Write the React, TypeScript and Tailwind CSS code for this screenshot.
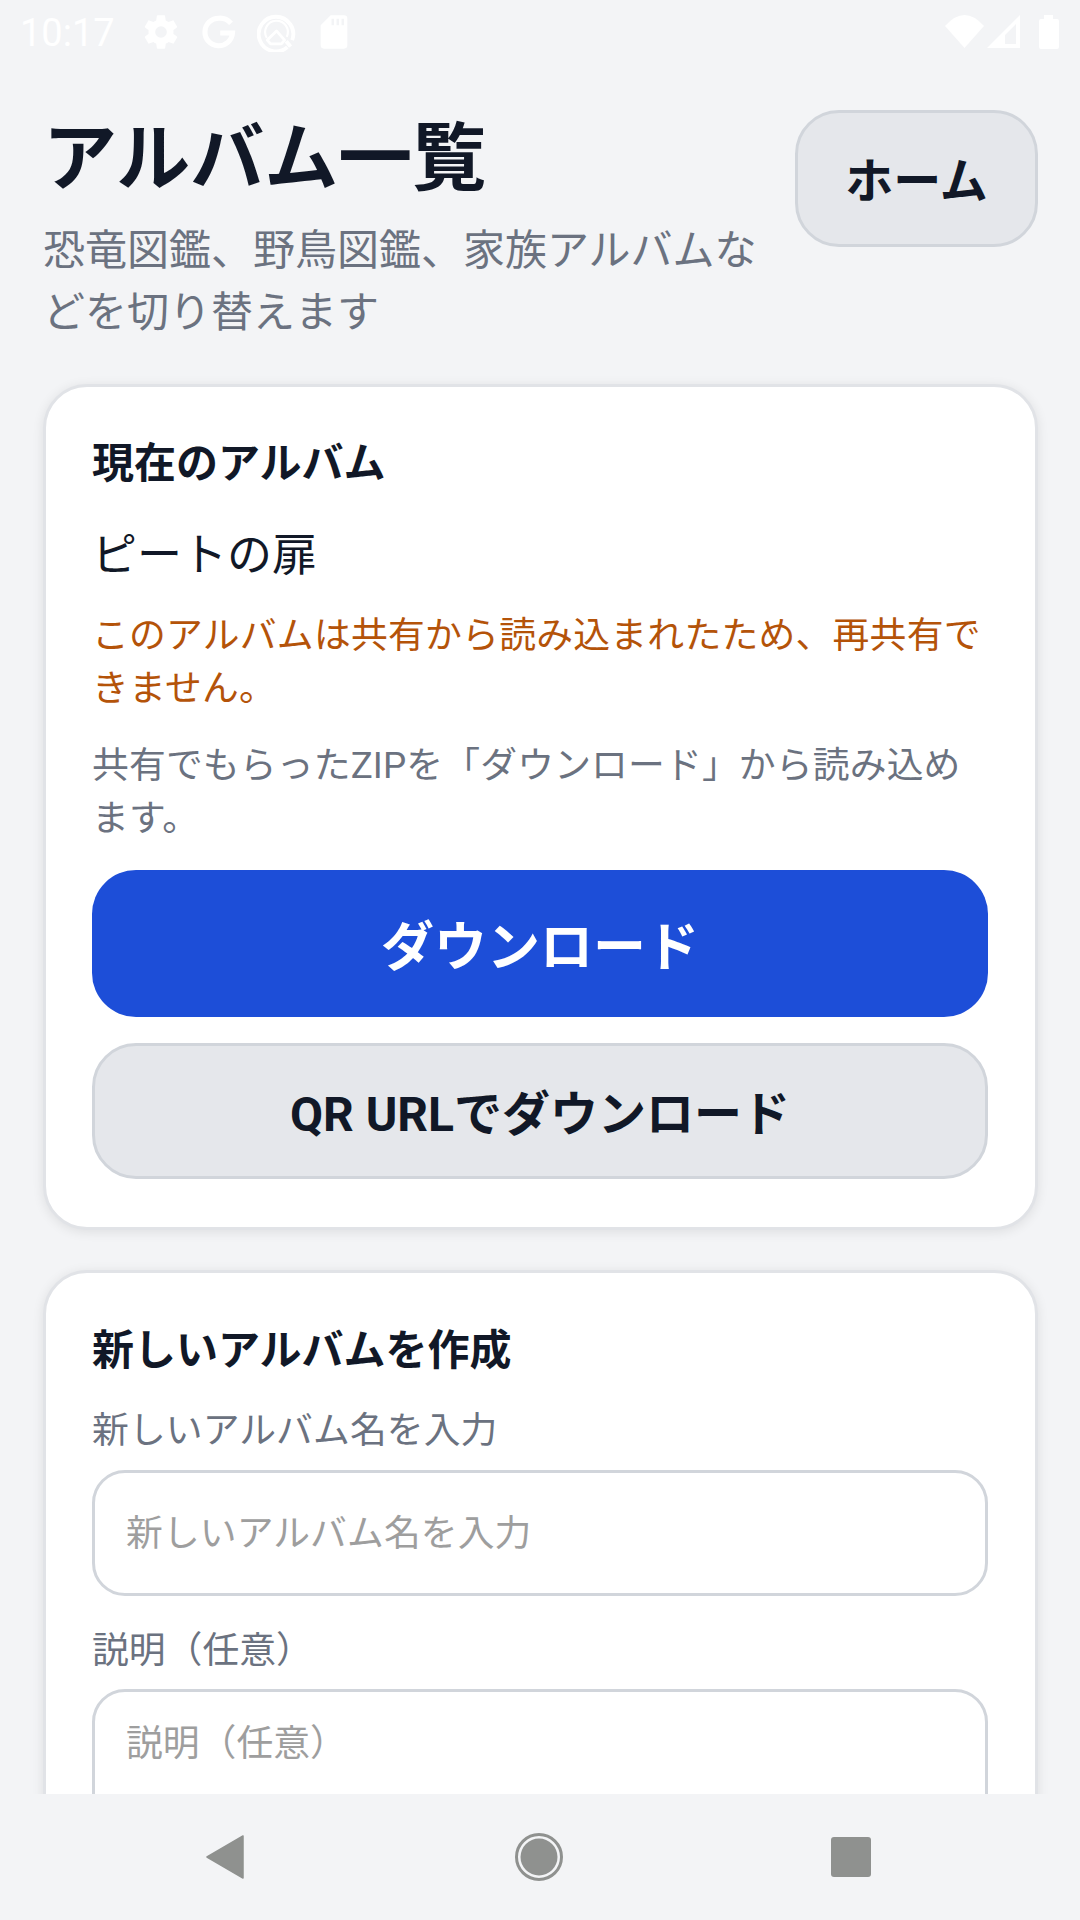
const FONT = "font-['Roboto','Noto_Sans_CJK_JP',sans-serif]";

function StatusBar() {
  return (
    <div className="h-[63px] shrink-0 flex items-center pl-[20px] pr-[21px] text-white">
      <span className="text-[38px] w-[94px] leading-none pt-[2px]">10:17</span>
      <div className="flex items-center ml-[27px]">
        <svg width="40" height="40" viewBox="0 0 24 24" fill="white">
          <path d="M19.4 13c.04-.32.1-.66.1-1s-.06-.68-.1-1l2.1-1.65c.2-.15.24-.42.12-.64l-2-3.46c-.12-.22-.4-.3-.6-.22l-2.5 1c-.52-.4-1.08-.73-1.7-.98l-.37-2.65A.49.49 0 0 0 14 2h-4c-.25 0-.46.18-.5.42l-.37 2.65c-.62.25-1.18.59-1.7.98l-2.5-1c-.22-.08-.48 0-.6.22l-2 3.46c-.13.22-.07.49.12.64L4.57 11c-.04.32-.07.66-.07 1s.03.68.07 1l-2.11 1.65c-.19.15-.25.42-.12.64l2 3.46c.12.22.38.3.6.22l2.5-1c.52.4 1.08.73 1.7.98l.37 2.65c.04.24.25.42.5.42h4c.25 0 .46-.18.5-.42l.37-2.65c.62-.25 1.18-.59 1.7-.98l2.5 1c.22.08.48 0 .6-.22l2-3.46c.12-.22.08-.49-.12-.64L19.4 13zM12 15.500a3.500 3.500 0 1 1 0-7 3.500 3.500 0 0 1 0 7z" />
        </svg>
        <svg width="36" height="36" viewBox="0 0 24 24" fill="none" stroke="white" strokeWidth="3.4" className="ml-[20px]">
          <path d="M20 6.200A9.600 9.600 0 0 0 12 2.800a9.200 9.200 0 1 0 9 9.900h-8.200" />
        </svg>
        <svg width="39" height="40" viewBox="0 0 36 37" fill="none" stroke="white" className="ml-[20px]">
          <path d="M28 32.500A16 16 0 1 1 32.500 26" strokeWidth="3.600" />
          <path d="M9 24A10.500 10.500 0 1 1 27.500 23" strokeWidth="2" />
          <path d="M18 17.500l7.500 8.500-3 3.500h-10l-3-3.500z" strokeWidth="2.600" strokeLinejoin="round" />
          <path d="M27 27l4 5" strokeWidth="3.600" />
        </svg>
        <svg width="40" height="40" viewBox="0 0 24 24" fill="white" className="ml-[18px]">
          <path d="M18 2h-8L4 8v12a2 2 0 0 0 2 2h12a2 2 0 0 0 2-2V4a2 2 0 0 0-2-2zM12 8h-1.500V4H12v4zm3 0h-1.500V4H15v4zm3 0h-1.500V4H18v4z" />
        </svg>
      </div>
      <div className="flex items-center ml-auto">
        <svg width="39" height="33" viewBox="0 0 39 33" fill="white">
          <path d="M0 11Q19.500-11 39 11L19.500 33z" />
        </svg>
        <svg width="33" height="33" viewBox="0 0 33 33" fill="white" className="ml-[3px]">
          <path fillRule="evenodd" d="M33 0v33H0zM29 9 18 20v9h11z" />
        </svg>
        <svg width="20" height="34" viewBox="0 0 20 34" fill="white" className="ml-[19px]">
          <path d="M5 0h9v4h4a2 2 0 0 1 2 2v26a2 2 0 0 1-2 2H2a2 2 0 0 1-2-2V6a2 2 0 0 1 2-2h3z" />
        </svg>
      </div>
    </div>
  );
}

function NavBar() {
  return (
    <div className="h-[126px] shrink-0 bg-[#f3f4f6] flex items-center justify-between pl-[206px] pr-[209px]">
      <svg width="38" height="44" viewBox="0 0 38 44" fill="#8f918f">
        <path d="M37 1v42L1 22z" stroke="#8f918f" strokeWidth="1.500" strokeLinejoin="round" />
      </svg>
      <svg width="48" height="48" viewBox="0 0 48 48" className="ml-[2px]">
        <circle cx="24" cy="24" r="22.500" fill="none" stroke="#8f918f" strokeWidth="3" />
        <circle cx="24" cy="24" r="18.500" fill="#8f918f" />
      </svg>
      <div className="w-[40px] h-[40px] bg-[#8f918f] rounded-[3px]" />
    </div>
  );
}

export default function App() {
  return (
    <div className={`${FONT} w-[1080px] h-[1920px] bg-[#f3f4f6] flex flex-col overflow-hidden`}>
      <StatusBar />

      <div className="flex-1 min-h-0 overflow-hidden pl-[43px] pr-[42px] pt-[53px]">
        {/* Header */}
        <div className="flex items-start justify-between">
          <div className="w-[725px]">
            <h1 className="text-[74px] font-bold leading-[85px] text-[#111827]">アルバム一覧</h1>
            <p className="text-[42px] leading-[62px] text-[#6b7280] mt-[19px]">
              恐竜図鑑、野鳥図鑑、家族アルバムなどを切り替えます
            </p>
          </div>
          <button className="w-[243px] h-[137px] mt-[-6px] pt-[7px] rounded-[44px] bg-[#e5e7eb] border-[3px] border-[#d1d5db] text-[48px] font-bold text-[#111827]">
            ホーム
          </button>
        </div>

        {/* Current album */}
        <div className="mt-[40px] bg-white rounded-[44px] border-[3px] border-[#e1e3e7] shadow-[0_2px_12px_rgba(0,0,0,0.09)] pl-[46px] pr-[47px] pt-[49px] pb-[48px]">
          <h2 className="text-[42px] font-bold leading-[56px] text-[#111827]">現在のアルバム</h2>
          <p className="text-[45px] leading-[58px] text-[#111827] mt-[35px]">ピートの扉</p>
          <p className="text-[36.800px] tracking-[0.25px] leading-[53px] text-[#b45309] mt-[24px]">
            このアルバムは共有から読み込まれたため、再共有できません。
          </p>
          <p className="text-[36.800px] tracking-[0.15px] leading-[53px] text-[#6b7280] mt-[24px]">
            共有でもらったZIPを「ダウンロード」から読み込めます。
          </p>
          <button className="w-full h-[147px] mt-[25px] pt-[10px] rounded-[44px] bg-[#1d4ed8] text-white text-[53px] font-bold">
            ダウンロード
          </button>
          <button className="w-full h-[136px] mt-[26px] pt-[7px] rounded-[44px] bg-[#e5e7eb] border-[3px] border-[#d1d5db] text-[#111827] text-[48px] font-bold">
            QR URLでダウンロード
          </button>
        </div>

        {/* New album */}
        <div className="mt-[40px] bg-white rounded-[44px] border-[3px] border-[#e1e3e7] shadow-[0_2px_12px_rgba(0,0,0,0.09)] pl-[46px] pr-[47px] pt-[50px] pb-[46px]">
          <h2 className="text-[42px] font-bold leading-[56px] text-[#111827]">新しいアルバムを作成</h2>
          <label className="block text-[36.800px] tracking-[0.1px] leading-[52px] text-[#6b7280] mt-[26px]">新しいアルバム名を入力</label>
          <input
            placeholder="新しいアルバム名を入力"
            className="block w-full h-[126px] mt-[13px] rounded-[33px] border-[3px] border-[#d1d5db] px-[31px] text-[36.800px] tracking-[0.1px] outline-none placeholder:text-[#9e9e9e]"
          />
          <label className="block text-[36.800px] leading-[52px] text-[#6b7280] mt-[29px]">説明（任意）</label>
          <textarea
            placeholder="説明（任意）"
            className="block w-full h-[260px] mt-[12px] rounded-[33px] border-[3px] border-[#d1d5db] px-[31px] py-[24px] text-[36.800px] outline-none resize-none placeholder:text-[#9e9e9e]"
          />
        </div>
      </div>

      <NavBar />
    </div>
  );
}
